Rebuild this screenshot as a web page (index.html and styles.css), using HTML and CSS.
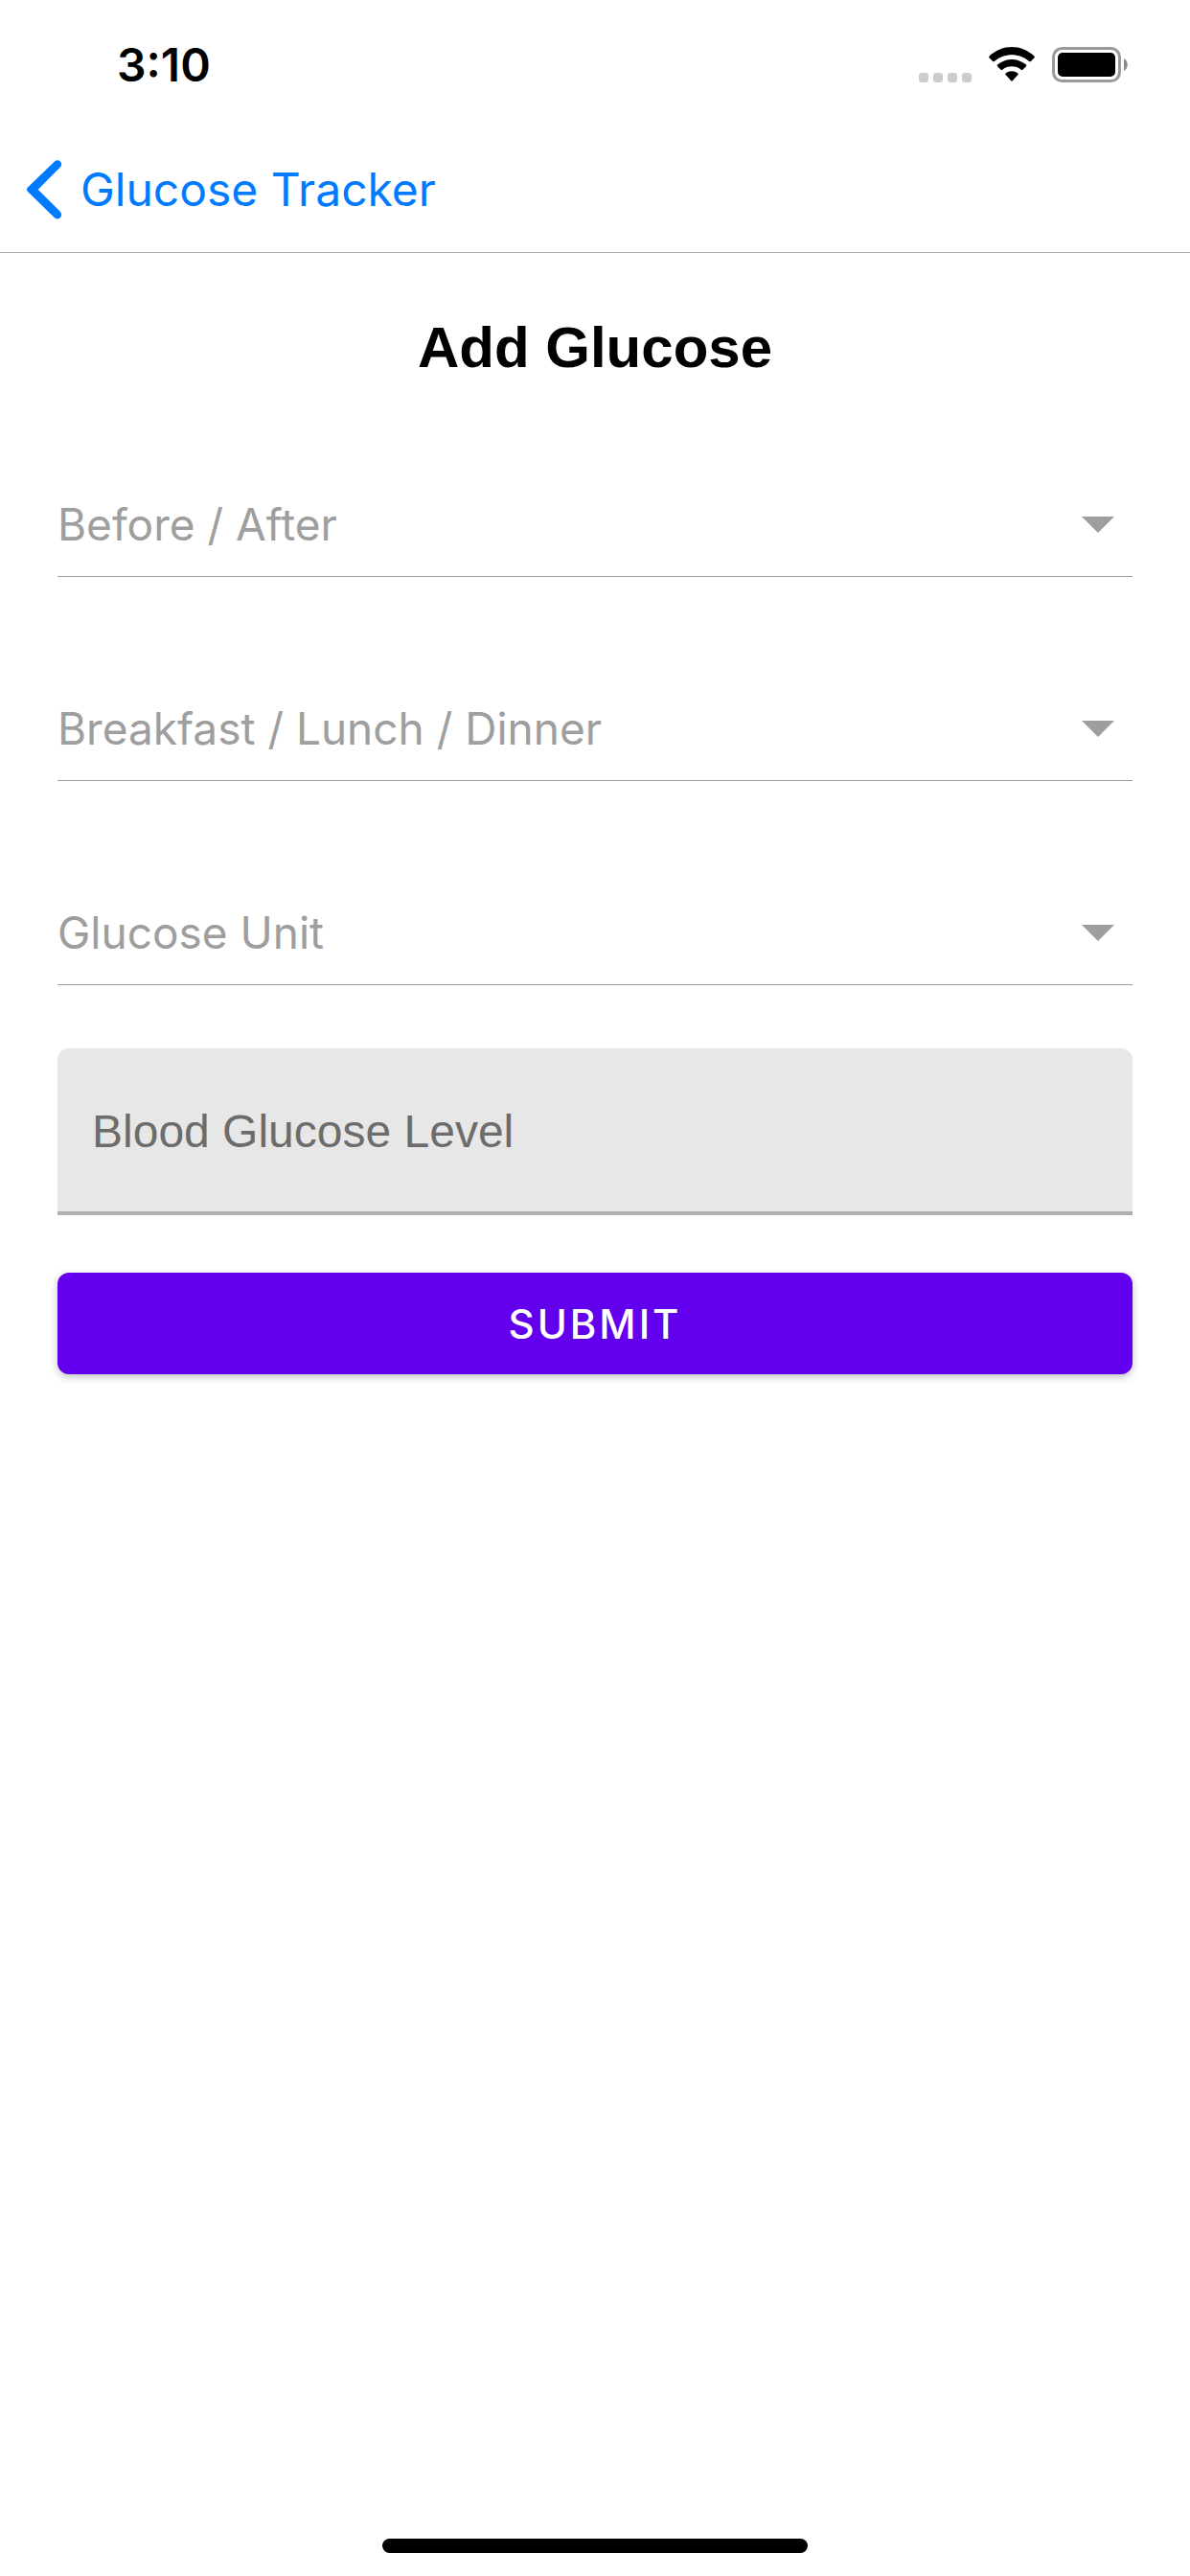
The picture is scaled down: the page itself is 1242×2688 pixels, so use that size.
FILE: index.html
```html
<!DOCTYPE html>
<html lang="en">
<head>
  <meta charset="utf-8">
  <meta name="viewport" content="width=device-width, initial-scale=1">
  <title>Add Glucose</title>
  <link rel="stylesheet" href="styles.css">
</head>
<body>
  <div class="status-bar">
    <time class="clock">3:10</time>
    <div class="status-icons">
      <svg class="signal" width="55" height="10" viewBox="0 0 55 10" aria-hidden="true">
        <rect width="10" height="10" rx="3"/>
        <rect x="15" width="10" height="10" rx="3"/>
        <rect x="30" width="10" height="10" rx="3"/>
        <rect x="45" width="10" height="10" rx="3"/>
      </svg>
      <svg class="wifi" width="48" height="37" viewBox="0 0 48 37" aria-hidden="true">
        <path d="M0.6 9.6Q-0.2 10.6 0.6 11.4L4.2 15Q5 15.6 5.8 14.9C16 5.9 32 5.9 42.2 14.9Q43 15.6 43.8 15L47.4 11.4Q48.2 10.6 47.4 9.6C34-3.2 14-3.2 0.6 9.6Z"/>
        <path d="M9 18.5Q8.200 19.400 9 20.200L12.600 23.800Q13.400 24.500 14.200 23.800C19.500 19.200 28.500 19.200 33.800 23.800Q34.600 24.500 35.400 23.800L39 20.200Q39.800 19.400 39 18.500C30.500 11 17.500 11 9 18.500Z"/>
        <path d="M17.600 27.400Q16.800 28.300 17.600 29.100L23.200 35.300Q24 36.200 24.800 35.300L30.400 29.100Q31.200 28.300 30.400 27.400C26.800 24.600 21.200 24.600 17.600 27.400Z"/>
      </svg>
      <svg class="battery" width="80" height="37" viewBox="0 0 80 37" aria-hidden="true">
        <rect class="battery-case" x="1.500" y="1.500" width="69" height="34" rx="9"/>
        <rect x="6" y="6" width="60" height="25" rx="5"/>
        <path class="battery-cap" d="M75 12C80 14.500 80 22.500 75 25Z"/>
      </svg>
    </div>
  </div>

  <header class="nav-bar">
    <a class="back-link" href="#tracker">
      <svg width="36" height="62" viewBox="0 0 36 62" aria-hidden="true">
        <path d="M28.700 1.700Q32 -1 35 1.500Q37.300 4.500 34.800 7.600L11.700 30.800L34.800 53.800Q37.300 57.200 35 60Q32 62.800 28.700 60L1 33Q-1.200 30.800 1 28.600Z"/>
      </svg>
      Glucose Tracker
    </a>
  </header>

  <main class="screen">
    <h1 class="title">Add Glucose</h1>
    <form class="form">
      <div class="pickers">
        <div class="picker">
          <select aria-label="Before / After">
            <option value="" selected>Before / After</option>
            <option>Before</option>
            <option>After</option>
          </select>
          <svg class="caret" width="34" height="17" viewBox="0 0 34 17" aria-hidden="true"><path d="M0 0H34L17 17Z"/></svg>
        </div>
        <div class="picker">
          <select aria-label="Breakfast / Lunch / Dinner">
            <option value="" selected>Breakfast / Lunch / Dinner</option>
            <option>Breakfast</option>
            <option>Lunch</option>
            <option>Dinner</option>
          </select>
          <svg class="caret" width="34" height="17" viewBox="0 0 34 17" aria-hidden="true"><path d="M0 0H34L17 17Z"/></svg>
        </div>
        <div class="picker">
          <select aria-label="Glucose Unit">
            <option value="" selected>Glucose Unit</option>
            <option>mg/dL</option>
            <option>mmol/L</option>
          </select>
          <svg class="caret" width="34" height="17" viewBox="0 0 34 17" aria-hidden="true"><path d="M0 0H34L17 17Z"/></svg>
        </div>
      </div>
      <input class="level" type="text" inputmode="decimal" placeholder="Blood Glucose Level" aria-label="Blood Glucose Level">
      <button class="submit" type="submit">SUBMIT</button>
    </form>
  </main>

  <footer class="home-area"><div class="home-indicator"></div></footer>
</body>
</html>
```
FILE: styles.css
```css
* {
  box-sizing: border-box;
}

body {
  display: flex;
  flex-direction: column;
  min-height: 100vh;
  margin: 0;
  background: #fff;
  color: #000;
  font-family: Inter, "Liberation Sans", sans-serif;
}

.status-bar {
  display: flex;
  align-items: center;
  justify-content: space-between;
  height: 132px;
  padding: 2px 64px 0 122px;
}

.clock {
  font-size: 48px;
  font-weight: 600;
}

.status-icons {
  display: flex;
  align-items: flex-end;
  gap: 18px;
}

.signal {
  fill: #ccc;
}

.battery-case {
  fill: none;
  stroke: #999;
  stroke-width: 3;
}

.battery-cap {
  fill: #8c8c8c;
}

.nav-bar {
  display: flex;
  align-items: center;
  height: 132px;
  padding: 0 28px;
  border-bottom: 1px solid #a7a7aa;
}

.back-link {
  display: flex;
  align-items: center;
  gap: 20px;
  color: #007aff;
  font-size: 48px;
  text-decoration: none;
}

.back-link svg {
  fill: currentColor;
}

.screen {
  flex: 1;
  padding: 63px 60px 0;
}

.title {
  margin: 0 0 94px;
  font-family: "Liberation Sans", Arial, sans-serif;
  font-size: 60px;
  font-weight: 700;
  line-height: 72px;
  text-align: center;
}

.form {
  display: flex;
  flex-direction: column;
}

.pickers {
  display: grid;
  gap: 104px;
}

.picker {
  display: grid;
  align-items: center;
  border-bottom: 1px solid #9e9e9e;
}

.picker select {
  grid-area: 1 / 1;
  width: 100%;
  height: 108px;
  padding: 0;
  border: 0;
  background: none;
  color: #9e9e9e;
  font: 400 46px Inter, "Liberation Sans", sans-serif;
  appearance: none;
}

.caret {
  grid-area: 1 / 1;
  justify-self: end;
  margin-right: 19px;
  fill: #9e9e9e;
  pointer-events: none;
}

.level {
  height: 174px;
  margin-top: 66px;
  padding: 2px 36px 0;
  border: 0;
  border-bottom: 4px solid #b0b0b0;
  border-radius: 12px 12px 0 0;
  background: #e7e7e7;
  font: 400 48px "Liberation Sans", Arial, sans-serif;
}

.level::placeholder {
  color: #6c6c6c;
  opacity: 1;
}

.submit {
  height: 106px;
  margin-top: 60px;
  border: 0;
  border-radius: 12px;
  background: #6200ee;
  box-shadow: 0 3px 8px rgba(0, 0, 0, 0.24);
  color: #fff;
  font: 500 42px Inter, "Liberation Sans", sans-serif;
  letter-spacing: 3px;
}

.home-area {
  display: flex;
  justify-content: center;
  padding-bottom: 24px;
}

.home-indicator {
  width: 444px;
  height: 15px;
  border-radius: 8px;
  background: #000;
}
```
